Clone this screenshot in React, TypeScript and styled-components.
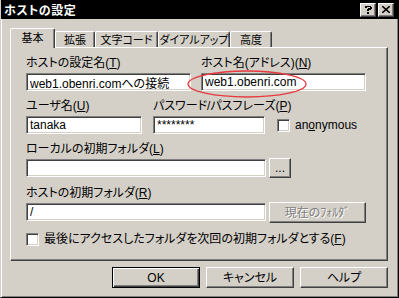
import styled, { createGlobalStyle, css } from 'styled-components';

const GlobalStyle = createGlobalStyle`
  html, body {
    margin: 0;
    padding: 0;
    background: #d4d0c8;
  }
  * {
    box-sizing: border-box;
  }
`;

const uiFont = `"Liberation Sans", "Noto Sans CJK JP", sans-serif`;

const raised = css`
  border: 1px solid;
  border-color: #fff #404040 #404040 #fff;
  box-shadow: inset -1px -1px 0 #808080, inset 1px 1px 0 #d4d0c8;
`;

const sunken = css`
  border: 1px solid;
  border-color: #808080 #fff #fff #808080;
  box-shadow: inset 1px 1px 0 #404040, inset -1px -1px 0 #d4d0c8;
`;

const Window = styled.div`
  width: 399px;
  height: 298px;
  background: #d4d0c8;
  border-left: 1px solid #d4d0c8;
  border-right: 1px solid #000;
  border-bottom: 1px solid #000;
  box-shadow: inset 1px 0 0 #fff, inset -1px -1px 0 #808080;
  display: flex;
  flex-direction: column;
  font-family: ${uiFont};
  font-size: 12px;
  font-feature-settings: 'palt';
  color: #000;
  overflow: hidden;
`;

const TitleBar = styled.div`
  height: 19px;
  margin-left: -1px;
  background: #000;
  display: flex;
  align-items: center;
  padding: 0 4px 0 4px;
`;

const Title = styled.div`
  flex: 1;
  color: #fff;
  font-weight: bold;
  font-size: 12px;
  letter-spacing: 0.5px;
`;

const TitleButton = styled.div`
  ${raised};
  width: 16px;
  height: 14px;
  background: #d4d0c8;
  display: flex;
  align-items: center;
  justify-content: center;
  margin-left: 2px;
`;

const Body = styled.div`
  padding: 9px 10px 0 9px;
  display: flex;
  flex-direction: column;
`;

const TabRow = styled.div`
  display: flex;
  align-items: flex-end;
  height: 19px;
  position: relative;
  z-index: 1;
`;

const Tab = styled.div<{ $active?: boolean; $w: number }>`
  width: ${({ $w }) => $w}px;
  height: ${({ $active }) => ($active ? 20 : 16)}px;
  margin-bottom: ${({ $active }) => ($active ? -1 : 0)}px;
  background: #d4d0c8;
  border-top: 1px solid #fff;
  border-left: 1px solid #fff;
  border-right: 1px solid #404040;
  border-radius: 2px 2px 0 0;
  box-shadow: inset -1px 0 0 #808080;
  display: flex;
  align-items: ${({ $active }) => ($active ? 'flex-start' : 'center')};
  justify-content: center;
  padding-top: ${({ $active }) => ($active ? 2 : 0)}px;
  line-height: 14px;
  font-size: 11px;
  white-space: nowrap;
`;

const Panel = styled.div`
  ${raised};
  height: 214px;
  padding: 8px 15px 0 15px;
  display: flex;
  flex-direction: column;
`;

const Row = styled.div<{ $gap?: number }>`
  display: flex;
  align-items: flex-end;
  gap: ${({ $gap }) => $gap ?? 10}px;
  margin-bottom: 8px;
`;

const Field = styled.div<{ $w?: number }>`
  display: flex;
  flex-direction: column;
  width: ${({ $w }) => ($w ? `${$w}px` : 'auto')};
  position: relative;
`;

const Label = styled.label`
  display: block;
  height: 14px;
  line-height: 14px;
  margin-bottom: 3px;
  white-space: nowrap;
`;

const TextBox = styled.input`
  ${sunken};
  width: 100%;
  height: 18px;
  padding: 0 3px;
  background: #fff;
  font-family: ${uiFont};
  font-size: 12px;
  font-feature-settings: 'palt';
  color: #000;
  outline: none;
`;

const InputLine = styled.div`
  display: flex;
  gap: 3px;
  align-items: flex-start;
`;

const PushButton = styled.button<{ $w: number; $h?: number; $disabled?: boolean; $default?: boolean }>`
  ${raised};
  width: ${({ $w }) => $w}px;
  height: ${({ $h }) => $h ?? 21}px;
  background: #d4d0c8;
  font-family: ${uiFont};
  font-size: 12px;
  font-feature-settings: 'palt';
  color: ${({ $disabled }) => ($disabled ? '#808080' : '#000')};
  text-shadow: ${({ $disabled }) => ($disabled ? '1px 1px 0 #fff' : 'none')};
  padding: 0;
  line-height: 1;
  margin-top: -1px;
  ${({ $default }) =>
    $default &&
    css`
      border: 1px solid #000;
      box-shadow: inset 1px 1px 0 #fff, inset -1px -1px 0 #404040, inset -2px -2px 0 #808080;
    `}
`;

const CheckBox = styled.span`
  ${sunken};
  display: inline-block;
  width: 13px;
  height: 13px;
  background: #fff;
  flex: none;
`;

const CheckLine = styled.label<{ $left?: number; $top?: number; $bottom?: number }>`
  display: flex;
  align-items: center;
  gap: 5px;
  white-space: nowrap;
  line-height: 14px;
  margin-left: ${({ $left }) => $left ?? 0}px;
  margin-top: ${({ $top }) => $top ?? 0}px;
  margin-bottom: ${({ $bottom }) => $bottom ?? 0}px;
`;

const Ellipse = styled.svg`
  position: absolute;
  left: -14px;
  top: 14px;
  width: 120px;
  height: 28px;
  pointer-events: none;
  overflow: visible;
`;

const Footer = styled.div`
  display: flex;
  gap: 6px;
  padding: 7px 0 0 102px;
`;

const App = () => (
  <>
    <GlobalStyle />
    <Window>
      <TitleBar>
        <Title>ホストの設定</Title>
        <TitleButton>
          <svg width="8" height="10" viewBox="0 0 8 10">
            <path d="M1 1h6v1h1v2h-1v1h-2v1h-2v-2h1v-1h2v-1h-3v1h-2v-2h1z M3 7h2v2h-2z" fill="#000" />
          </svg>
        </TitleButton>
        <TitleButton>
          <svg width="8" height="7" viewBox="0 0 8 7">
            <path d="M0 0l8 7M8 0l-8 7" stroke="#000" strokeWidth="1.6" />
          </svg>
        </TitleButton>
      </TitleBar>
      <Body>
        <TabRow>
          <Tab $active $w={45}>基本</Tab>
          <Tab $w={40}>拡張</Tab>
          <Tab $w={63}>文字コード</Tab>
          <Tab $w={72}>ダイアルアップ</Tab>
          <Tab $w={42}>高度</Tab>
        </TabRow>
        <Panel>
          <Row $gap={10}>
            <Field $w={165}>
              <Label>ホストの設定名(<u>T</u>)</Label>
              <TextBox defaultValue="web1.obenri.comへの接続" />
            </Field>
            <Field $w={165}>
              <Label>ホスト名(アドレス)(<u>N</u>)</Label>
              <TextBox defaultValue="web1.obenri.com" />
              <Ellipse viewBox="0 0 120 28">
                <ellipse cx="60" cy="14" rx="59" ry="13" fill="none" stroke="#e8383d" strokeWidth="1.3" />
              </Ellipse>
            </Field>
          </Row>
          <Row $gap={11}>
            <Field $w={116}>
              <Label>ユーザ名(<u>U</u>)</Label>
              <TextBox defaultValue="tanaka" />
            </Field>
            <Field $w={112}>
              <Label>パスワード/パスフレーズ(<u>P</u>)</Label>
              <TextBox defaultValue="********" />
            </Field>
            <CheckLine $left={1} $bottom={2}>
              <CheckBox />
              <span>
                an<u>o</u>nymous
              </span>
            </CheckLine>
          </Row>
          <Row>
            <Field>
              <Label>ローカルの初期フォルダ(<u>L</u>)</Label>
              <InputLine>
                <Field $w={240}>
                  <TextBox defaultValue="" />
                </Field>
                <PushButton $w={22} $h={20}>
                  ...
                </PushButton>
              </InputLine>
            </Field>
          </Row>
          <Row>
            <Field>
              <Label>ホストの初期フォルダ(<u>R</u>)</Label>
              <InputLine>
                <Field $w={240}>
                  <TextBox defaultValue="/" />
                </Field>
                <PushButton $w={97} $disabled>
                  現在のﾌｫﾙﾀﾞ
                </PushButton>
              </InputLine>
            </Field>
          </Row>
          <CheckLine $top={1}>
            <CheckBox />
            <span>
              最後にアクセスしたフォルダを次回の初期フォルダとする(<u>F</u>)
            </span>
          </CheckLine>
        </Panel>
        <Footer>
          <PushButton $w={88} $default>
            OK
          </PushButton>
          <PushButton $w={88}>キャンセル</PushButton>
          <PushButton $w={88}>ヘルプ</PushButton>
        </Footer>
      </Body>
    </Window>
  </>
);

export default App;
